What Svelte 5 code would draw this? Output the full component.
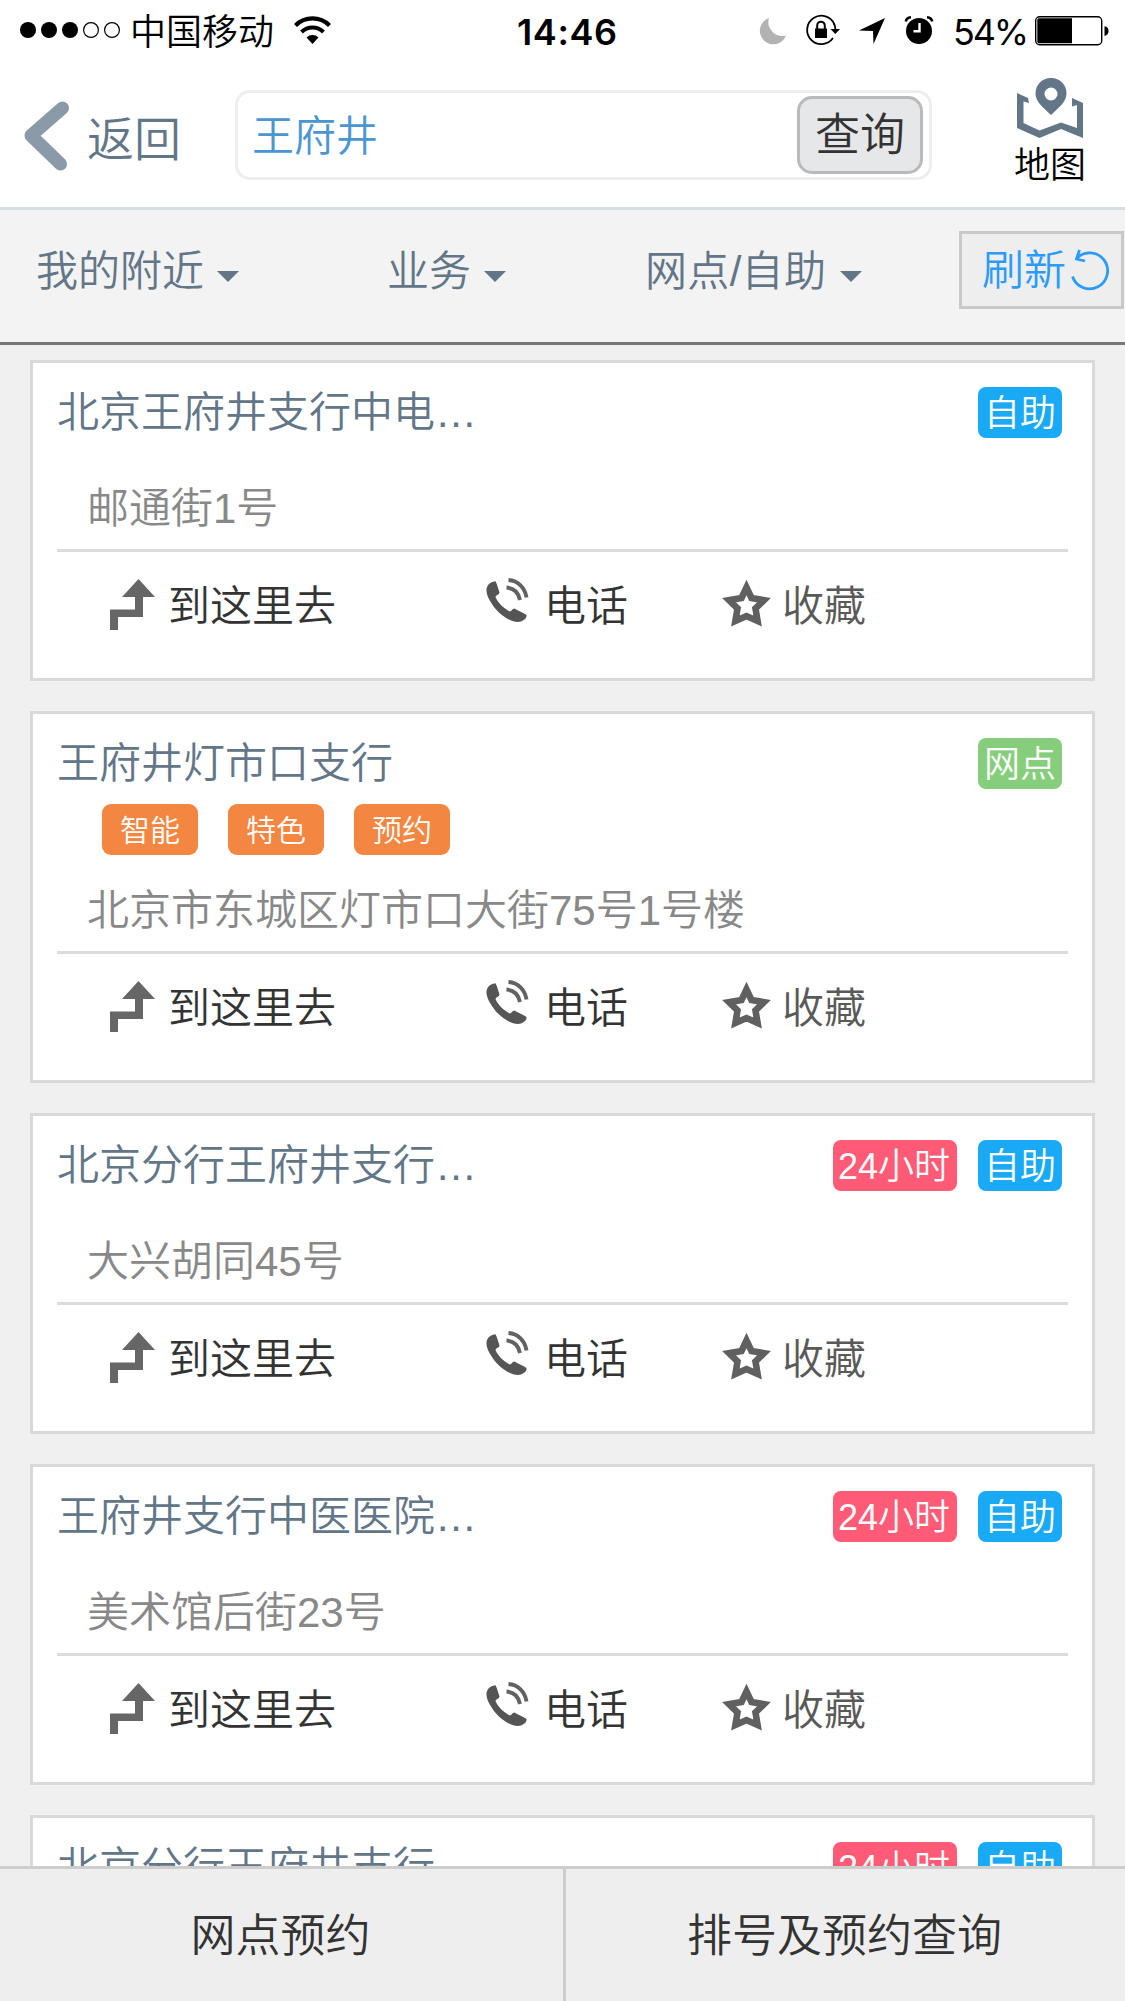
<script>
  const filters = ['我的附近', '业务', '网点/自助'];
  const auto = { text: '自助', kind: 'blue' };
  const allDay = { text: '24小时', kind: 'red' };
  const branches = [
    { name: '北京王府井支行中电…', badges: [auto], tags: [], address: '邮通街1号' },
    {
      name: '王府井灯市口支行',
      badges: [{ text: '网点', kind: 'green' }],
      tags: ['智能', '特色', '预约'],
      address: '北京市东城区灯市口大街75号1号楼'
    },
    { name: '北京分行王府井支行…', badges: [allDay, auto], tags: [], address: '大兴胡同45号' },
    { name: '王府井支行中医医院…', badges: [allDay, auto], tags: [], address: '美术馆后街23号' },
    { name: '北京分行王府井支行…', badges: [allDay, auto], tags: [], address: '' }
  ];
</script>

<div class="screen">
  <div class="status">
    <svg class="signal" viewBox="0 0 100 16">
      <circle cx="8" cy="8" r="8" />
      <circle cx="29" cy="8" r="8" />
      <circle cx="50" cy="8" r="8" />
      <circle class="hollow" cx="71" cy="8" r="7.4" />
      <circle class="hollow" cx="92" cy="8" r="7.4" />
    </svg>
    <span class="carrier">中国移动</span>
    <svg class="wifi" viewBox="0 0 37 28">
      <path d="M1.5 9.5A24 24 0 0 1 35.500 9.500" fill="none" stroke="#000" stroke-width="4.200" />
      <path d="M7.500 16A15.500 15.500 0 0 1 29.500 16" fill="none" stroke="#000" stroke-width="4" />
      <path d="M12.500 21.500A8.500 8.500 0 0 1 24.500 21.500L18.500 28Z" />
    </svg>
    <span class="time">14:46</span>
    <svg class="moon" viewBox="0 0 27 27">
      <path d="M10 0A14 14 0 0 0 27 17.500A13.500 13.500 0 1 1 10 0Z" fill="#b2b2b2" />
    </svg>
    <svg class="lock" viewBox="0 0 34 30">
      <path d="M28.500 9.500A14.200 14.200 0 1 0 27 23" fill="none" stroke="#000" stroke-width="1.800" />
      <path d="M28 8.500Q29.300 11 29.400 15" fill="none" stroke="#000" stroke-width="1.800" />
      <path d="M24.500 14H34L29.300 19Z" />
      <path d="M9 13.500H21V23H9Z" />
      <path d="M11.200 14V10.500A3.800 3.800 0 0 1 18.800 10.500V14" fill="none" stroke="#000" stroke-width="2" />
    </svg>
    <svg class="arrow" viewBox="0 0 26 26"><path d="M26 0L14.500 26L14 13L0 12.500Z" /></svg>
    <svg class="alarm" viewBox="0 0 28 28">
      <circle cx="14" cy="15" r="13" />
      <path d="M0.800 5.500Q1.500 1.500 6 1.200M27.200 5.500Q26.500 1.500 22 1.200" fill="none" stroke="#000" stroke-width="2.600" />
      <path d="M14.500 7V15.200H8.500" fill="none" stroke="#fff" stroke-width="2.400" />
    </svg>
    <span class="percent">54%</span>
    <svg class="battery" viewBox="0 0 74 30">
      <rect x="0.700" y="0.700" width="66" height="28" rx="4" fill="#fff" stroke="#000" stroke-width="1.400" />
      <path d="M4 2.300H37V27.200H4Q2.300 27.200 2.300 25.500V4Q2.300 2.300 4 2.300Z" />
      <path d="M69.500 10.200Q73.500 11 73.500 15Q73.500 19 69.500 20Z" />
    </svg>
  </div>

  <header>
    <svg class="back" viewBox="0 0 46 70">
      <path d="M39.500 7L8 34.500L37.500 63" fill="none" stroke="#8a9aa8" stroke-width="13" stroke-linecap="round" stroke-linejoin="round" />
    </svg>
    <span class="back-text">返回</span>
    <div class="search">
      <span class="query">王府井</span>
      <button>查询</button>
    </div>
    <div class="map">
      <svg viewBox="0 0 66 60">
        <path d="M0 15L11 20L12 25L6.500 23.500V45L22.500 52.500L44 44.500L60 50V27L55 28.500V20L66 25V60L44 51L22.500 60L0 50Z" />
        <path fill-rule="evenodd" d="M34 0C25 0 18.500 6.500 18.500 15.500C18.500 24 26 29 34 37C42 29 49.500 24 49.500 15.500C49.500 6.500 43 0 34 0ZM34 9.500A6.500 6.500 0 1 1 34 22.500A6.500 6.500 0 1 1 34 9.500Z" />
      </svg>
      <span>地图</span>
    </div>
  </header>

  <nav>
    {#each filters as f}
      <div class="filter">
        <span>{f}</span>
        <svg viewBox="0 0 22 11"><path d="M0 0H22L11 11Z" /></svg>
      </div>
    {/each}
    <button class="refresh">
      <span>刷新</span>
      <svg viewBox="0 0 37 42">
        <path d="M5.500 9.500A18 18 0 1 1 1.500 27.500" />
        <path d="M8.500 1L5.500 10L14 12" />
      </svg>
    </button>
  </nav>

  <main>
    {#each branches as b}
      <article>
        <div class="head">
          <h2>{b.name}</h2>
          {#each b.badges as badge}
            <span class="badge {badge.kind}">{badge.text}</span>
          {/each}
        </div>
        <div class="tags" class:filled={b.tags.length > 0}>
          {#each b.tags as tag}<span>{tag}</span>{/each}
        </div>
        <p>{b.address}</p>
        <div class="actions">
          <svg class="route" viewBox="0 0 45 51">
            <path d="M28.500 0L45 18H33V38H8V51H0V30.500H25V18H12Z" />
          </svg>
          <span class="go">到这里去</span>
          <svg class="phone" viewBox="0 0 43 45">
            <path d="M1.500 8C3 5 6 3.500 9.500 3.200C11 6 12 10 13.500 14.500C13 17 10.500 16.500 9.500 19C12 25 17.500 30 23.500 33.500C26 33.500 26 30.500 28.500 30.500C32.500 33 37 34.500 40.500 37C41 40 38 42 35 43.500C26 46 12 36 6 26C1 19-1 12 1.500 8Z" />
            <path d="M22.500 2C32 2.500 39 10 40.500 19.500" fill="none" stroke="#626262" stroke-width="3.900" />
            <path d="M20.500 9.500C28 10 32.500 14.500 34 22" fill="none" stroke="#626262" stroke-width="3.900" />
          </svg>
          <span class="call">电话</span>
          <svg class="star" viewBox="0 0 45 44">
            <path d="M22.500 5.500L27.500 16L40 18.200L31.500 26.500L33.600 39L22.500 34L11.400 39L13.500 26.500L5 18.200L17.500 16Z" fill="none" stroke="#606060" stroke-width="6.600" />
          </svg>
          <span class="fav">收藏</span>
        </div>
      </article>
    {/each}
  </main>

  <footer>
    <div>网点预约</div>
    <div>排号及预约查询</div>
  </footer>
</div>

<style>
  :global(body) {
    margin: 0;
  }
  .screen {
    width: 1125px;
    height: 2001px;
    overflow: hidden;
    display: flex;
    flex-direction: column;
    background: #f0f0f0;
    font-family: 'Liberation Sans', 'Noto Sans CJK SC', sans-serif;
    font-weight: 350;
    font-size: 42px;
    line-height: 60px;
    white-space: nowrap;
  }
  svg {
    display: block;
    flex: none;
    overflow: visible;
  }
  span {
    flex: none;
  }
  button {
    font: inherit;
    box-sizing: border-box;
    padding: 0;
    margin: 0;
  }

  .status {
    height: 60px;
    flex: none;
    display: flex;
    align-items: center;
    background: #fff;
    color: #000;
    font-size: 36px;
  }
  .signal {
    width: 100px;
    height: 16px;
    margin-left: 20px;
  }
  .hollow {
    fill: none;
    stroke: #000;
    stroke-width: 1.2;
  }
  .carrier {
    width: 144px;
    margin: 6px 0 0 10px;
  }
  .wifi {
    width: 37px;
    height: 28px;
    margin-left: 20px;
  }
  .time {
    width: 102px;
    margin: 3px 0 0 186px;
    font-family: Inter, sans-serif;
    font-weight: 600;
    letter-spacing: 0.6px;
  }
  .moon {
    width: 27px;
    height: 27px;
    margin: 2px 0 0 140px;
  }
  .lock {
    width: 34px;
    height: 30px;
    margin-left: 20px;
  }
  .arrow {
    width: 26px;
    height: 26px;
    margin: 2px 0 0 19px;
  }
  .alarm {
    width: 28px;
    height: 28px;
    margin-left: 20px;
  }
  .percent {
    width: 72px;
    margin: 3px 0 0 20px;
    font-family: Inter, sans-serif;
    font-weight: 400;
    letter-spacing: -2.2px;
  }
  .battery {
    width: 74px;
    height: 30px;
    margin: 1px 0 0 10px;
  }

  header {
    height: 147px;
    flex: none;
    display: flex;
    align-items: flex-start;
    background: #fff;
    border-bottom: 3px solid #d3dde4;
  }
  .back {
    width: 46px;
    height: 70px;
    margin: 41px 0 0 23px;
  }
  .back-text {
    width: 96px;
    margin: 50px 0 0 18px;
    font-size: 47px;
    color: #627688;
  }
  .search {
    box-sizing: border-box;
    width: 697px;
    height: 90px;
    margin: 30px 0 0 52px;
    padding: 3px 6px 0 14px;
    display: flex;
    justify-content: space-between;
    border: 3px solid #eee;
    border-radius: 15px;
  }
  .query {
    margin-top: 11px;
    color: #4b96d1;
  }
  .search button {
    width: 126px;
    height: 78px;
    padding-top: 2px;
    border: 3px solid #bababa;
    border-radius: 15px;
    background: #e6e7e9;
    color: #333;
    font-size: 45px;
  }
  .map {
    margin: 18px 0 0 82px;
    display: flex;
    flex-direction: column;
    align-items: center;
    font-size: 36px;
    line-height: 50px;
    color: #000;
  }
  .map svg {
    width: 66px;
    height: 60px;
    fill: #627688;
  }
  .map span {
    margin-top: 3px;
  }

  nav {
    height: 132px;
    flex: none;
    display: flex;
    align-items: flex-start;
    background: #f3f3f3;
    border-bottom: 3px solid #777;
    color: #627688;
  }
  .filter {
    display: flex;
    align-items: center;
    padding-top: 32px;
    gap: 13px;
  }
  .filter:nth-child(1) {
    margin-left: 36px;
  }
  .filter:nth-child(2) {
    margin-left: 148px;
  }
  .filter:nth-child(3) {
    margin-left: 139px;
    gap: 14px;
  }
  .filter:nth-child(3) span {
    letter-spacing: 0.3px;
  }
  .filter svg {
    width: 22px;
    height: 11px;
    margin-top: 8px;
    fill: #627688;
  }
  .refresh {
    width: 165px;
    height: 78px;
    margin: 21px 1px 0 auto;
    padding-left: 20px;
    display: flex;
    align-items: center;
    border: 3px solid #c9c9c9;
    background: #eee;
    color: #2b9bfa;
  }
  .refresh span {
    margin-top: 2px;
  }
  .refresh svg {
    width: 37px;
    height: 42px;
    margin-left: 5px;
    fill: none;
    stroke: #2b9bfa;
    stroke-width: 2.8;
  }

  main {
    flex: 1;
    min-height: 0;
    overflow: hidden;
    display: flex;
    flex-direction: column;
    gap: 30px;
    padding: 15px 30px 0;
  }
  article {
    flex: none;
    background: #fff;
    border: 3px solid #d9d9d9;
    padding: 0 24px;
  }
  .head {
    display: flex;
    align-items: flex-start;
    gap: 21px;
    padding: 24px 6px 0 0;
    height: 51px;
  }
  h2 {
    flex: 1;
    margin: -4px 0 0;
    font-size: 42px;
    font-weight: 350;
    line-height: 60px;
    color: #627688;
  }
  .badge {
    height: 51px;
    padding: 0 6px;
    border-radius: 8px;
    font-size: 36px;
    line-height: 54px;
    color: #fff;
  }
  .blue {
    background: #19a9f5;
  }
  .red {
    background: #ff5b77;
    padding: 0 7px 0 5px;
  }
  .green {
    background: #86ce7c;
  }
  .tags {
    display: flex;
    gap: 30px;
    height: 40px;
    padding-left: 45px;
  }
  .tags.filled {
    height: 76px;
    padding-top: 15px;
  }
  .tags.filled + p {
    padding-top: 0;
  }
  .tags span {
    width: 96px;
    height: 51px;
    border-radius: 9px;
    background: #f38742;
    color: #fff;
    font-size: 30px;
    line-height: 53px;
    text-align: center;
  }
  p {
    height: 71px;
    margin: 0;
    padding-left: 30px;
    line-height: 61px;
    color: #888;
    border-bottom: 3px solid #dcdcdc;
  }
  .actions {
    height: 126px;
    display: flex;
    align-items: flex-start;
    color: #333;
  }
  .actions span {
    margin-top: 25px;
  }
  .route {
    width: 45px;
    height: 51px;
    margin: 27px 0 0 53px;
    fill: #666;
  }
  .go {
    width: 168px;
    margin-left: 13px;
  }
  .phone {
    width: 43px;
    height: 45px;
    margin: 26px 0 0 150px;
    fill: #555;
  }
  .call {
    width: 84px;
    margin-left: 15px;
  }
  .star {
    width: 45px;
    height: 44px;
    margin: 30px 0 0 96px;
  }
  .fav {
    margin-left: 13px;
    color: #595959;
  }

  footer {
    height: 132px;
    flex: none;
    display: flex;
    border-top: 3px solid #cdcdcd;
    background: #eee;
    color: #333;
    font-size: 45px;
  }
  footer div {
    flex: 1;
    padding: 38px 2px 0 0;
    text-align: center;
  }
  footer div:first-child {
    flex: none;
    width: 561px;
    border-right: 3px solid #cdcdcd;
  }
</style>
